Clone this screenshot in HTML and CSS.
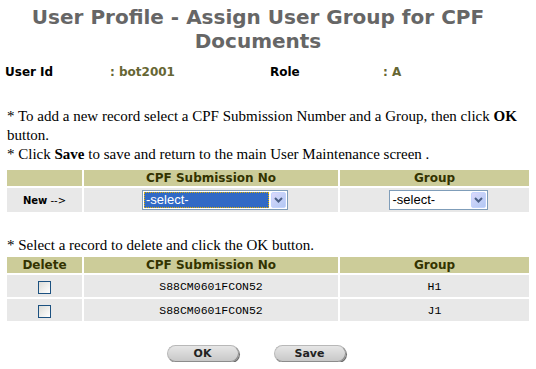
FILE: index.html
```html
<!DOCTYPE html>
<html lang="en">
<head>
    <meta charset="UTF-8">
    <title>User Profile - Assign User Group for CPF Documents</title>
    <link rel="stylesheet" href="styles.css">
</head>
<body>
    <h1 class="page-title">User Profile - Assign User Group for CPF Documents</h1>

    <div class="user-info">
        <span class="label">User Id</span>
        <span class="value">: bot2001</span>
        <span class="label">Role</span>
        <span class="value">: A</span>
    </div>

    <div class="notes">
        <p>* To add a new record select a CPF Submission Number and a Group, then click <b>OK</b> button.</p>
        <p>* Click <b>Save</b> to save and return to the main User Maintenance screen .</p>
    </div>

    <table class="grid add-grid">
        <thead>
            <tr>
                <th class="col-first"></th>
                <th class="col-cpf">CPF Submission No</th>
                <th>Group</th>
            </tr>
        </thead>
        <tbody>
            <tr>
                <td class="new-label"><b>New</b> --&gt;</td>
                <td>
                    <span class="combo combo-wide">
                        <span class="combo-text selected">-select-</span>
                        <span class="combo-btn">
                            <svg width="9" height="6" viewBox="0 0 9 6"><path d="M1 1 L4.5 4.5 L8 1" fill="none" stroke="#4b5f86" stroke-width="2"/></svg>
                        </span>
                    </span>
                </td>
                <td>
                    <span class="combo combo-narrow">
                        <span class="combo-text">-select-</span>
                        <span class="combo-btn">
                            <svg width="9" height="6" viewBox="0 0 9 6"><path d="M1 1 L4.5 4.5 L8 1" fill="none" stroke="#4b5f86" stroke-width="2"/></svg>
                        </span>
                    </span>
                </td>
            </tr>
        </tbody>
    </table>

    <div class="notes delete-note">
        <p>* Select a record to delete and click the OK button.</p>
    </div>

    <table class="grid del-grid">
        <thead>
            <tr>
                <th class="col-first">Delete</th>
                <th class="col-cpf">CPF Submission No</th>
                <th>Group</th>
            </tr>
        </thead>
        <tbody>
            <tr>
                <td><span class="check"></span></td>
                <td class="code">S88CM0601FCON52</td>
                <td class="code">H1</td>
            </tr>
            <tr>
                <td><span class="check"></span></td>
                <td class="code">S88CM0601FCON52</td>
                <td class="code">J1</td>
            </tr>
        </tbody>
    </table>

    <div class="actions">
        <button class="pill-btn">OK</button>
        <button class="pill-btn">Save</button>
    </div>
</body>
</html>
```

FILE: styles.css
```css
:root {
    --head-bg: #cccc99;
    --head-text: #333300;
    --row-bg: #e8e8e8;
    --olive: #666633;
}

* {
    box-sizing: border-box;
}

body {
    margin: 0;
    padding: 0 5px;
    background: white;
    color: black;
    font-family: 'DejaVu Sans', Verdana, sans-serif;
}

.page-title {
    margin: 5px 0 0;
    padding-right: 20px;
    text-align: center;
    font-size: 20px;
    line-height: 24px;
    font-weight: bold;
    color: #666666;
}

.user-info {
    display: grid;
    grid-template-columns: 105px 160px 113px 1fr;
    margin-top: 12px;
    font-size: 12px;
    font-weight: bold;
    line-height: 14px;
}

.user-info .value {
    color: var(--olive);
}

.notes {
    margin-top: 28px;
    padding-left: 2px;
    font-family: 'Liberation Serif', 'Times New Roman', serif;
    font-size: 15px;
    line-height: 19px;
}

.notes p {
    margin: 0;
}

.delete-note {
    margin-top: 22px;
}

.grid {
    width: 100%;
    border-collapse: separate;
    border-spacing: 2px;
}

.grid th {
    background: var(--head-bg);
    color: var(--head-text);
    font-size: 12px;
    font-weight: bold;
    height: 16px;
    padding: 0;
    line-height: 14px;
}

.grid td {
    background: var(--row-bg);
    text-align: center;
    padding: 0;
}

.col-first {
    width: 75px;
}

.col-cpf {
    width: 254px;
}

.add-grid {
    margin-top: 4px;
}

.add-grid td {
    height: 24px;
}

.del-grid td {
    height: 22px;
}

.new-label {
    font-size: 10px;
}

.combo {
    display: inline-flex;
    align-items: center;
    height: 20px;
    border: 1px solid #7f9db9;
    background: white;
    padding: 1px;
    vertical-align: middle;
    text-align: left;
}

.combo-wide {
    width: 146px;
    margin-left: 8px;
}

.combo-narrow {
    width: 99px;
    margin-left: 7px;
}

.combo-text {
    flex: 1;
    height: 16px;
    padding-left: 2px;
    font-family: 'Liberation Sans', Arial, sans-serif;
    font-size: 13px;
    line-height: 16px;
}

.combo-text.selected {
    background: #316ac5;
    color: white;
    outline: 1px dotted #e0b000;
    outline-offset: -1px;
    margin-right: 2px;
}

.combo-btn {
    display: flex;
    align-items: center;
    justify-content: center;
    width: 15px;
    height: 16px;
    border-radius: 2px;
    background: linear-gradient(135deg, #dcd8fb 0%, #c4d0f7 50%, #b3c8f3 100%);
    border: 1px solid #c3d3fd;
}

.check {
    display: inline-block;
    width: 13px;
    height: 13px;
    border: 1px solid #1c5180;
    background: linear-gradient(135deg, #dcdcd7, #ffffff);
    vertical-align: middle;
}

.code {
    font-family: 'Liberation Mono', 'Courier New', monospace;
    font-size: 11.5px;
}

.actions {
    display: flex;
    justify-content: center;
    gap: 35px;
    margin-top: 22px;
    padding-right: 24px;
}

.pill-btn {
    width: 72px;
    height: 17px;
    padding: 0;
    border: 1px solid #8c8c8c;
    border-top-color: #b8b8b8;
    border-left-color: #b8b8b8;
    border-radius: 9px;
    background: linear-gradient(#e6e6e6, #c8c8c8);
    box-shadow: 1px 1px 0 #6e6e6e;
    font-family: 'DejaVu Sans', Verdana, sans-serif;
    font-size: 11px;
    font-weight: bold;
    color: #222;
    line-height: 15px;
}
```
